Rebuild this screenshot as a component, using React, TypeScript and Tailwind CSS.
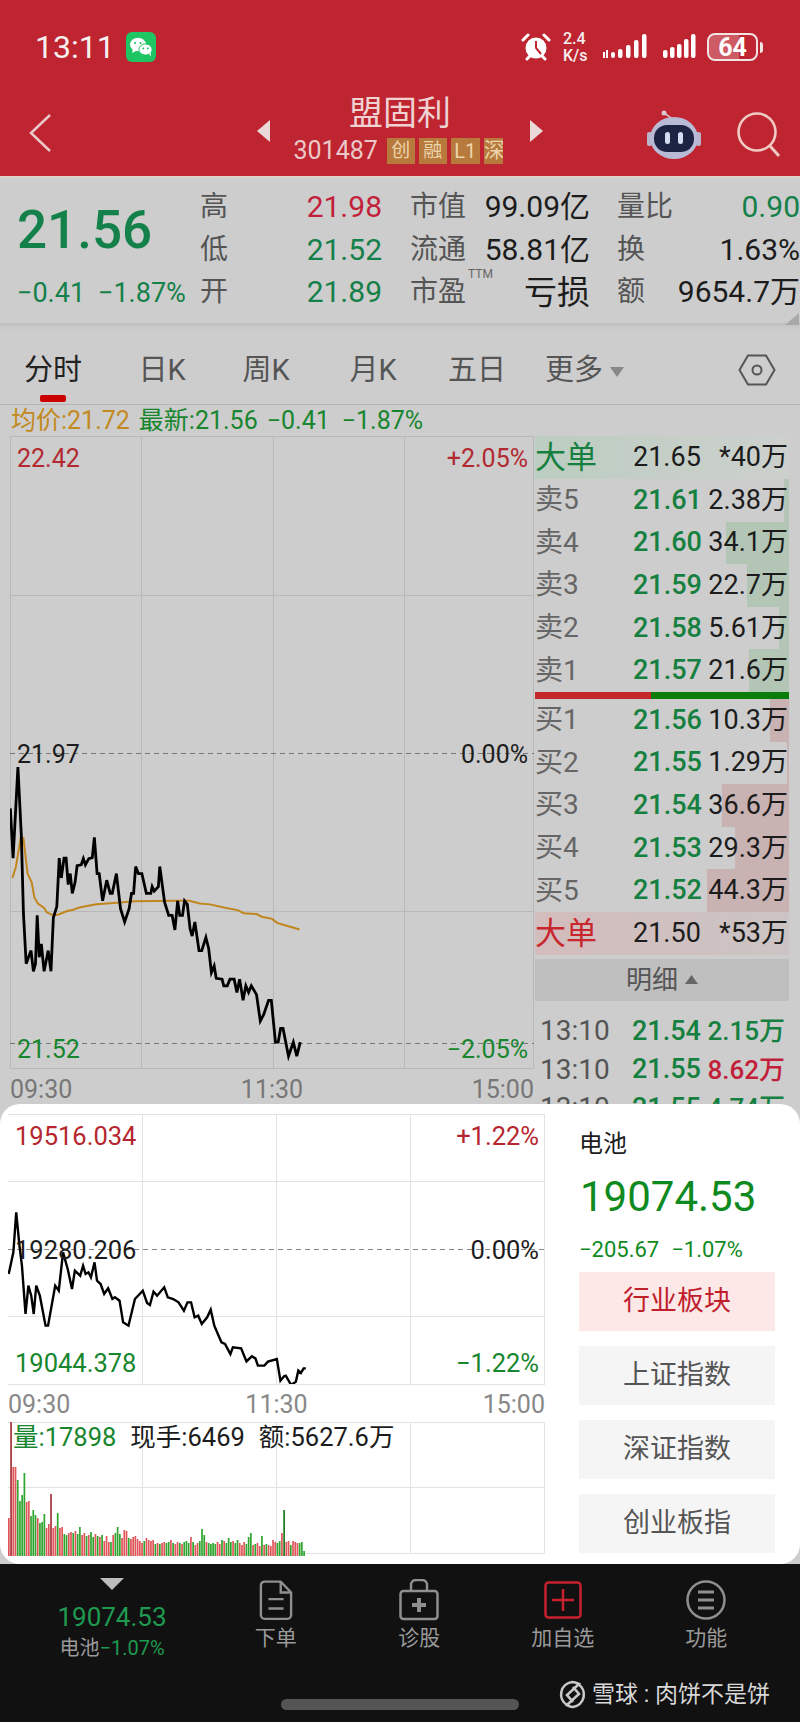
const priceLine =
  "30,862 38,975 52,768 62,925 68,1100 76,1215 90,1185 97,1232 103,1215 108,1105 114,1200 120,1170 128,1232 140,1185 148,1232 155,1110 165,1085 172,975 178,1020 186,975 192,975 198,1035 204,1010 210,1055 218,1030 224,992 236,990 242,976 248,990 258,976 268,974 274,928 282,1010 288,1010 298,1072 310,1025 320,1055 326,1055 338,1010 350,1090 362,1120 375,1090 382,1055 388,1055 394,994 402,1010 412,1010 425,1055 438,1055 442,1040 448,1050 460,1040 464,994 478,1075 490,1105 500,1105 508,1138 516,1072 522,1105 530,1105 536,1072 544,1080 552,1135 558,1152 566,1120 578,1185 586,1185 598,1155 606,1180 614,1235 622,1220 628,1248 645,1250 650,1265 660,1265 668,1250 680,1250 688,1280 696,1250 706,1298 714,1265 722,1280 730,1265 745,1285 756,1345 766,1330 780,1298 788,1298 800,1393 808,1393 815,1362 822,1362 838,1425 852,1393 862,1425 872,1393";
const avgLine =
  "36,1020 46,995 60,930 68,930 80,1010 92,1030 100,1065 110,1078 128,1088 136,1098 155,1105 170,1103 195,1095 210,1093 230,1087 280,1080 330,1077 390,1073 500,1072 550,1072 580,1078 610,1080 650,1087 690,1093 708,1100 745,1102 760,1108 790,1113 805,1122 830,1128 870,1137";
const indexLine =
  "25,525 38,460 46,340 55,440 62,500 72,645 80,560 88,590 95,645 102,560 112,590 128,680 135,680 155,560 165,575 177,460 190,510 202,570 210,515 225,530 233,500 240,525 248,520 255,535 265,490 272,545 282,555 292,585 303,568 315,600 322,595 335,605 345,670 360,680 378,600 400,575 412,612 420,618 430,578 440,590 460,565 470,595 485,600 500,610 515,635 525,610 535,610 545,655 555,650 565,675 580,655 590,632 600,680 620,730 630,735 645,765 652,745 675,748 690,787 705,772 715,778 722,800 740,800 750,788 775,780 785,845 795,832 800,830 815,858 828,848 835,815 842,822 850,808 856,808";

const volumes = [
  38, 137, 89, 89, 76, 55, 61, 83, 54, 55, 40, 46, 41, 38, 33, 34, 42, 28, 32, 62, 28, 30, 43, 28, 29, 22, 21, 23, 24,
  23, 25, 22, 29, 21, 23, 20, 21, 24, 19, 22, 20, 19, 21, 15, 20, 14, 14, 21, 23, 29, 22, 18, 26, 25, 18, 17, 19, 20,
  17, 15, 13, 15, 18, 16, 15, 16, 12, 13, 12, 13, 14, 13, 14, 16, 13, 12, 14, 13, 12, 14, 15, 13, 19, 14, 11, 13, 15,
  27, 21, 14, 13, 12, 13, 12, 14, 12, 16, 15, 13, 18, 14, 15, 13, 16, 13, 11, 14, 12, 19, 23, 11, 12, 13, 10, 20, 11,
  12, 11, 10, 16, 14, 13, 15, 23, 46, 14, 15, 11, 15, 14, 13, 13, 14, 5,
];
const volumeColors =
  "rrrrggggrrgggrgggrrrrrgrrggrrgrggrrgrggrgrgrrrgrgggrrrgrrrrrrgrrrrgrgrrggrgrrgrgggrgrrgggrggggrrgrgggrggrrrgggrgrrgrgrrrrggrgrrgrrrg";

function OrderRow({ label, price, qty, bar, barColor }: { label: string; price: string; qty: string; bar: number; barColor: string }) {
  return (
    <div className="relative flex h-[42.6px] items-center">
      <div className={`absolute top-0 right-0 bottom-0 ${barColor}`} style={{ width: bar }} />
      <span className="relative w-[98px] text-[28px] text-[#666]">{label}</span>
      <span className="relative w-[72px] text-[27px] font-medium text-[#158040]">{price}</span>
      <span className="relative flex-1 pr-[1px] text-right text-[27px] text-[#1c1c1c]">{qty}</span>
    </div>
  );
}

function BigOrder({ color, bg, price, qty }: { color: string; bg: string; price: string; qty: string }) {
  return (
    <div className={`flex h-[43px] items-center ${bg}`}>
      <span className={`w-[98px] text-[31px] ${color}`}>大单</span>
      <span className="w-[72px] text-[27px] text-[#1c1c1c]">{price}</span>
      <span className="flex-1 pr-[1px] text-right text-[27px] text-[#1c1c1c]">{qty}</span>
    </div>
  );
}

function Tick({ price, qty, qtyColor }: { price: string; qty: string; qtyColor: string }) {
  return (
    <div className="flex h-[38.5px] items-center text-[27px]">
      <span className="w-[97px] pl-[5px] text-[28px] text-[#555]">13:10</span>
      <span className="w-[72px] font-medium text-[#158040]">{price}</span>
      <span className={`flex-1 pr-[4px] text-right text-[26px] font-medium ${qtyColor}`}>{qty}</span>
    </div>
  );
}

function Stat({ label, value, color, big }: { label: string; value: string; color: string; big?: boolean }) {
  return (
    <div className="flex h-[42.5px] items-center justify-between">
      <span className="text-[28px] text-[#555]">{label}</span>
      <span className={`${big ? "text-[33px]" : "text-[30px]"} ${color}`}>{value}</span>
    </div>
  );
}

function SideButton({ label, active }: { label: string; active?: boolean }) {
  return (
    <div
      className={`flex h-[59px] items-center justify-center text-[27px] ${
        active ? "bg-[#fde8e8] text-[#c0202c]" : "bg-[#f5f5f5] text-[#555]"
      }`}
    >
      {label}
    </div>
  );
}

function BottomItem({ label, children }: { label: string; children: React.ReactNode }) {
  return (
    <div className="flex w-[143.5px] flex-col items-center">
      <div className="flex h-[44px] items-center">{children}</div>
      <span className="mt-[6px] text-[21px] text-[#9a9a9a]">{label}</span>
    </div>
  );
}

export default function App() {
  return (
    <div className="flex h-[1722px] w-[800px] flex-col overflow-hidden bg-[#cdcdcd] font-['Roboto','Noto_Sans_CJK_SC',sans-serif] leading-none">
      <header className="h-[176px] bg-[#be2530]">
        <div className="flex h-[94px] items-center pl-[35px]">
          <span className="text-[32px] text-[#f7f0f0]">13:11</span>
          <svg className="ml-[11px]" width="30" height="30" viewBox="0 0 30 30">
            <rect width="30" height="30" rx="6" fill="#1fc463" />
            <ellipse cx="12" cy="12.5" rx="8" ry="6.8" fill="#fff" />
            <path d="M7 17l-1 4 4-2z" fill="#fff" />
            <ellipse cx="19.5" cy="17.5" rx="6.6" ry="5.6" fill="#fff" stroke="#1fc463" />
            <path d="M23 22l2 2.5-.5-4z" fill="#fff" />
            <circle cx="9" cy="11" r="1.1" fill="#1fc463" />
            <circle cx="14.5" cy="11" r="1.1" fill="#1fc463" />
            <circle cx="17.3" cy="16.5" r="0.9" fill="#1fc463" />
            <circle cx="21.8" cy="16.5" r="0.9" fill="#1fc463" />
          </svg>
          <svg className="mr-[12px] ml-auto" width="30" height="30" viewBox="0 0 30 30">
            <circle cx="15" cy="16" r="10.5" fill="#fff" />
            <path d="M15 9v7l5 6" fill="none" stroke="#be2530" strokeWidth="2" />
            <path d="M2 8l5-5M28 8l-5-5M6 27l3-3M24 27l-3-3" stroke="#fff" strokeWidth="3" strokeLinecap="round" />
          </svg>
          <div className="flex w-[28px] flex-col items-start text-[16px] leading-[17px] font-medium text-[#f7f0f0]">
            <span>2.4</span>
            <span>K/s</span>
          </div>
          <svg className="ml-[11px]" width="46" height="26" viewBox="0 0 46 26">
            <path d="M1 18h2v6H1zM4 16h2v8H4z" fill="#fff" />
            <rect x="9" y="18" width="4" height="6" rx="2" fill="#fff" />
            <rect x="16" y="15" width="4.5" height="9" rx="2" fill="#fff" />
            <rect x="24" y="11" width="4.5" height="13" rx="2" fill="#fff" />
            <rect x="32" y="6" width="4.5" height="18" rx="2" fill="#fff" />
            <rect x="40" y="0" width="4.5" height="24" rx="2" fill="#fff" />
          </svg>
          <svg className="ml-[15px]" width="33" height="26" viewBox="0 0 33 26">
            <rect x="0" y="16" width="4.5" height="8" rx="2" fill="#fff" />
            <rect x="7" y="13" width="4.5" height="11" rx="2" fill="#fff" />
            <rect x="14" y="10" width="4.5" height="14" rx="2" fill="#fff" />
            <rect x="21" y="5" width="4.5" height="19" rx="2" fill="#fff" />
            <rect x="28" y="0" width="4.5" height="24" rx="2" fill="#fff" />
          </svg>
          <div className="relative ml-[11px] flex h-[28px] w-[51px] items-center justify-center overflow-hidden rounded-[8px] border-2 border-[#f3e4e4] text-[25px] font-bold text-white">
            <div className="absolute top-0 bottom-0 left-0 w-[64%] bg-white/25" />
            <span className="relative">64</span>
          </div>
          <div className="mr-[37px] ml-[2px] h-[11px] w-[3px] rounded-r bg-[#f3e4e4]" />
        </div>
        <div className="flex h-[82px] items-center">
          <div className="w-[257px] pb-[4px] pl-[28px]">
            <svg width="24" height="40" viewBox="0 0 24 40">
              <path d="M22 2L3 20l19 18" fill="none" stroke="#ecc9c9" strokeWidth="2.5" />
            </svg>
          </div>
          <svg className="mb-[9px]" width="13" height="22" viewBox="0 0 13 22">
            <path d="M13 0v22L0 11z" fill="#ead9d9" />
          </svg>
          <div className="flex w-[260px] flex-col items-center pb-[11px]">
            <span className="text-[34px] text-[#efd2d2]">盟固利</span>
            <div className="mt-[8px] flex w-[213px] items-center">
              <span className="mr-[9px] text-[25px] text-[#ecc9c9]">301487</span>
              <span className="mr-[4px] flex h-[26px] w-[28px] shrink-0 items-center justify-center bg-[#b77a3c] text-[19px] text-[#ecd4ac]">创</span>
              <span className="mr-[4px] flex h-[26px] w-[28px] shrink-0 items-center justify-center bg-[#b77a3c] text-[19px] text-[#ecd4ac]">融</span>
              <span className="mr-[4px] flex h-[26px] w-[29px] shrink-0 items-center justify-center bg-[#b77a3c] text-[20px] text-[#ecd4ac]">L1</span>
              <span className="flex h-[26px] w-[19px] shrink-0 items-center justify-start overflow-hidden bg-[#b77a3c] text-[21px] text-[#ecd4ac]">深</span>
            </div>
          </div>
          <svg className="mb-[9px]" width="13" height="22" viewBox="0 0 13 22">
            <path d="M0 0v22l13-11z" fill="#ead9d9" />
          </svg>
          <svg className="ml-[104px]" width="54" height="50" viewBox="0 0 54 50">
            <path d="M25 9c-3-3-6-4-7-6" fill="none" stroke="#d9c7d0" strokeWidth="1.6" />
            <circle cx="17" cy="3" r="2.5" fill="#d9c7d0" />
            <rect x="0" y="22" width="5" height="14" rx="2" fill="#b9b3cc" />
            <rect x="49" y="22" width="5" height="14" rx="2" fill="#b9b3cc" />
            <ellipse cx="27" cy="28" rx="24" ry="21" fill="#b9bad6" />
            <rect x="7" y="15" width="40" height="27" rx="13" fill="#1d2443" />
            <rect x="18" y="22" width="5" height="12" rx="2.5" fill="#d5dcf2" />
            <rect x="31" y="22" width="5" height="12" rx="2.5" fill="#d5dcf2" />
          </svg>
          <svg className="ml-[36px]" width="44" height="46" viewBox="0 0 44 46">
            <circle cx="20" cy="20" r="18.5" fill="none" stroke="#f0c8c4" strokeWidth="2.6" />
            <path d="M33 34l9 10" stroke="#f0c8c4" strokeWidth="3" />
          </svg>
        </div>
      </header>
      <div className="h-[2px] bg-[#dcd3cd]" />

      <section className="flex h-[145px] bg-[#cdcdcd] pt-[8px]">
        <div className="w-[200px] shrink-0 pl-[17px]">
          <div className="mt-[18px] text-[53px] font-medium text-[#14804a]">21.56</div>
          <div className="mt-[23px] flex text-[27px] text-[#14804a]">
            <span className="w-[81px]">−0.41</span>
            <span>−1.87%</span>
          </div>
        </div>
        <div className="w-[182px] shrink-0">
          <Stat label="高" value="21.98" color="text-[#c21f3a]" />
          <Stat label="低" value="21.52" color="text-[#14804a]" />
          <Stat label="开" value="21.89" color="text-[#14804a]" />
        </div>
        <div className="ml-[28px] w-[180px] shrink-0">
          <Stat label="市值" value="99.09亿" color="text-[#1c1c1c]" />
          <Stat label="流通" value="58.81亿" color="text-[#1c1c1c]" />
          <div className="relative">
            <Stat label="市盈" value="亏损" color="text-[#1c1c1c]" big />
            <span className="absolute top-[-3px] left-[58px] text-[12px] text-[#666]">TTM</span>
          </div>
        </div>
        <div className="ml-[27px] w-[183px] shrink-0">
          <Stat label="量比" value="0.90" color="text-[#14804a]" />
          <Stat label="换" value="1.63%" color="text-[#1c1c1c]" />
          <Stat label="额" value="9654.7万" color="text-[#1c1c1c]" />
        </div>
      </section>
      <div className="relative h-[9px] border-t-2 border-[#c0c0c0] bg-gradient-to-b from-[#c6c6c6] to-[#cdcdcd]">
        <svg className="absolute top-[-12px] right-[1px]" width="14" height="12" viewBox="0 0 14 12">
          <path d="M14 0v12H0z" fill="#a8a8a8" />
        </svg>
      </div>

      <nav className="flex h-[73px] items-center border-b border-[#b5b5b5] pt-[4px] text-[29px] text-[#555]">
        <div className="relative w-[106px] text-center text-[#222]">
          分时
          <div className="absolute top-[39px] left-[40px] h-[7px] w-[26px] rounded-[2px] bg-[#cc0000]" />
        </div>
        <div className="w-[112px] text-center">日K</div>
        <div className="w-[96px] text-center">周K</div>
        <div className="w-[118px] text-center">月K</div>
        <div className="w-[90px] text-center">五日</div>
        <div className="ml-[23px]">更多</div>
        <svg className="mt-[3px] ml-[7px]" width="14" height="10" viewBox="0 0 14 10">
          <path d="M0 0h14L7 10z" fill="#888" />
        </svg>
        <svg className="ml-[114px]" width="38" height="32" viewBox="0 0 38 32">
          <path d="M10 1.500h18L36.500 16 28 30.500H10L1.500 16z" fill="none" stroke="#555" strokeWidth="2" />
          <circle cx="19" cy="16" r="4.500" fill="none" stroke="#555" strokeWidth="2" />
        </svg>
      </nav>

      <div className="flex h-[31px] items-center pl-[11px] text-[25px] whitespace-pre">
        <span className="text-[#c28a1e]">均价:21.72</span>
        <span className="ml-[9px] text-[#17862e]">最新:21.56</span>
        <span className="ml-[9px] text-[#17862e]">−0.41</span>
        <span className="ml-[12px] text-[#17862e]">−1.87%</span>
      </div>

      <section className="flex h-[668px] overflow-hidden">
        <div className="w-[535px] shrink-0 pl-[10px]">
          <div className="relative h-[633px] w-[524px]">
            <svg className="absolute inset-0" width="524" height="633" viewBox="0 0 524 633">
              <path d="M0.500 0.500h523v632h-523zM131.500 0v633M263.500 0v633M394.500 0v633M0 159.500h524M0 475.500h524" fill="none" stroke="#b8b8b8" />
              <path d="M0 317.500h524M0 607.500h524" stroke="#777" strokeDasharray="5 4" />
            </svg>
            <svg className="absolute inset-0" width="524" height="633" viewBox="29 16 1522 1438" preserveAspectRatio="none">
              <polyline points={avgLine} fill="none" stroke="#c2861e" strokeWidth="2" vectorEffect="non-scaling-stroke" />
              <polyline points={priceLine} fill="none" stroke="#000" strokeWidth="2.800" vectorEffect="non-scaling-stroke" />
            </svg>
            <span className="absolute top-[10px] left-[7px] text-[25px] text-[#b22a30]">22.42</span>
            <span className="absolute top-[10px] right-[6px] text-[25px] text-[#b22a30]">+2.05%</span>
            <span className="absolute top-[306px] left-[7px] text-[25px] text-[#1c1c1c]">21.97</span>
            <span className="absolute top-[306px] right-[6px] text-[25px] text-[#1c1c1c]">0.00%</span>
            <span className="absolute top-[601px] left-[7px] text-[25px] text-[#17862e]">21.52</span>
            <span className="absolute top-[601px] right-[6px] text-[25px] text-[#17862e]">−2.05%</span>
          </div>
          <div className="mt-[8px] flex w-[524px] justify-between text-[25px] text-[#777]">
            <span>09:30</span>
            <span>11:30</span>
            <span>15:00</span>
          </div>
        </div>
        <div className="w-[254px] shrink-0">
          <BigOrder color="text-[#158040]" bg="bg-gradient-to-r from-[#bccdc1] to-[#cdd0cd]" price="21.65" qty="*40万" />
          <OrderRow label="卖5" price="21.61" qty="2.38万" bar={5} barColor="bg-[#b3c6b5]" />
          <OrderRow label="卖4" price="21.60" qty="34.1万" bar={63} barColor="bg-[#b3c6b5]" />
          <OrderRow label="卖3" price="21.59" qty="22.7万" bar={42} barColor="bg-[#b3c6b5]" />
          <OrderRow label="卖2" price="21.58" qty="5.61万" bar={10} barColor="bg-[#b3c6b5]" />
          <OrderRow label="卖1" price="21.57" qty="21.6万" bar={40} barColor="bg-[#b3c6b5]" />
          <div className="flex h-[7px]">
            <div className="w-[116px] bg-[#c4282c]" />
            <div className="flex-1 bg-[#0a7d0a]" />
          </div>
          <OrderRow label="买1" price="21.56" qty="10.3万" bar={19} barColor="bg-[#c9b2b2]" />
          <OrderRow label="买2" price="21.55" qty="1.29万" bar={2} barColor="bg-[#c9b2b2]" />
          <OrderRow label="买3" price="21.54" qty="36.6万" bar={67} barColor="bg-[#c9b2b2]" />
          <OrderRow label="买4" price="21.53" qty="29.3万" bar={54} barColor="bg-[#c9b2b2]" />
          <OrderRow label="买5" price="21.52" qty="44.3万" bar={82} barColor="bg-[#c9b2b2]" />
          <BigOrder color="text-[#c8282d]" bg="bg-gradient-to-r from-[#d3bcbc] to-[#ccc4c4]" price="21.50" qty="*53万" />
          <div className="mt-[4px] flex h-[42px] items-center justify-center bg-[#bfbfbf] text-[26px] text-[#555]">
            明细
            <svg className="ml-[7px]" width="13" height="9" viewBox="0 0 13 9">
              <path d="M0 9h13L6.500 0z" fill="#666" />
            </svg>
          </div>
          <div className="pt-[11px]">
            <Tick price="21.54" qty="2.15万" qtyColor="text-[#158040]" />
            <Tick price="21.55" qty="8.62万" qtyColor="text-[#c21f3a]" />
            <Tick price="21.55" qty="4.74万" qtyColor="text-[#158040]" />
          </div>
        </div>
      </section>

      <section className="relative z-10 flex h-[460px] rounded-[20px] bg-white">
        <div className="w-[555px] shrink-0 pt-[10px] pl-[8px]">
          <div className="relative h-[270px] w-[537px]">
            <svg className="absolute inset-0" width="537" height="271" viewBox="0 0 537 271">
              <path d="M0 0.500h537M536.500 0v270M134.500 0v270M268.500 0v270M402.500 0v270M0 67.500h537M0 202.500h537M0 270.500h537" fill="none" stroke="#e2e2e2" />
              <path d="M0 135.500h537" stroke="#888" strokeDasharray="5 4" />
            </svg>
            <svg className="absolute inset-0" width="537" height="270" viewBox="23 45 1502 810" preserveAspectRatio="none">
              <polyline points={indexLine} fill="none" stroke="#000" strokeWidth="2.400" vectorEffect="non-scaling-stroke" />
            </svg>
            <span className="absolute top-[10px] left-[7px] text-[25.500px] text-[#b5262e]">19516.034</span>
            <span className="absolute top-[10px] right-[6px] text-[25.500px] text-[#b5262e]">+1.22%</span>
            <span className="absolute top-[124px] left-[7px] text-[25.500px] text-[#1c1c1c]">19280.206</span>
            <span className="absolute top-[124px] right-[6px] text-[25.500px] text-[#1c1c1c]">0.00%</span>
            <span className="absolute top-[237px] left-[7px] text-[25.500px] text-[#17862e]">19044.378</span>
            <span className="absolute top-[237px] right-[6px] text-[25.500px] text-[#17862e]">−1.22%</span>
          </div>
          <div className="flex h-[38px] w-[537px] items-center justify-between pt-[2px] text-[25px] text-[#888]">
            <span>09:30</span>
            <span>11:30</span>
            <span>15:00</span>
          </div>
          <div className="relative h-[134px] w-[537px]">
            <svg className="absolute inset-0" width="537" height="134" viewBox="0 0 537 134">
              <path d="M0 0.500h537M536.500 0v132M134.500 0v132M268.500 0v132M402.500 0v132M0 65.500h537M0 131.500h537" fill="none" stroke="#e2e2e2" />
              {volumes.map((v, i) => (
                <rect
                  key={i}
                  x={i * 2.22}
                  y={134 - v}
                  width="1.700"
                  height={v}
                  fill={i === 1 || i === 19 ? "#a8323a" : volumeColors[i] === "r" ? "#e0555a" : v > 40 && i > 100 ? "#1d7a1d" : "#2fa52f"}
                />
              ))}
            </svg>
            <div className="absolute top-[3px] left-[5px] flex text-[25.500px] whitespace-pre">
              <span className="text-[#17862e]">量:17898</span>
              <span className="ml-[14px] text-[#1c1c1c]">现手:6469</span>
              <span className="ml-[14px] text-[#1c1c1c]">额:5627.6万</span>
            </div>
          </div>
        </div>
        <div className="flex-1 pr-[25px] pl-[24px]">
          <div className="mt-[28px] text-[24px] text-[#1c1c1c]">电池</div>
          <div className="mt-[20px] pl-[1px] text-[42px] text-[#0f8a1e]">19074.53</div>
          <div className="mt-[20px] flex h-[23px] items-center text-[22px] whitespace-pre text-[#0f8a1e]">
            <span>−205.67</span>
            <span className="ml-[12px]">−1.07%</span>
          </div>
          <div className="mt-[11px] flex flex-col gap-[15px]">
            <SideButton label="行业板块" active />
            <SideButton label="上证指数" />
            <SideButton label="深证指数" />
            <SideButton label="创业板指" />
          </div>
        </div>
      </section>

      <footer className="relative flex flex-1 flex-col bg-[#111]">
        <div className="flex pt-[14px]">
          <div className="flex w-[204px] flex-col items-center pl-[20px]">
            <svg width="24" height="12" viewBox="0 0 24 12">
              <path d="M0 0h24L12 12z" fill="#bdbdbd" />
            </svg>
            <span className="mt-[14px] text-[26px] text-[#1f9a50]">19074.53</span>
            <div className="mt-[8px] text-[20px] whitespace-pre">
              <span className="text-[#9a9a9a]">电池</span>
              <span className="text-[#1f9a50]">−1.07%</span>
            </div>
          </div>
          <BottomItem label="下单">
            <svg width="34" height="42" viewBox="0 0 36 42" fill="none" stroke="#8f8f8f" strokeWidth="2.500">
              <path d="M6 1.500h17L34 13v24a4 4 0 0 1-4 4H6a4 4 0 0 1-4-4V5.500a4 4 0 0 1 4-4z" />
              <path d="M23 2v11h11M10 20h16M10 30h16" />
            </svg>
          </BottomItem>
          <BottomItem label="诊股">
            <svg width="40" height="42" viewBox="0 0 40 42" fill="none" stroke="#8f8f8f" strokeWidth="2.500">
              <rect x="1.500" y="12" width="37" height="28" rx="3" />
              <path d="M12 12V6a5 5 0 0 1 5-5h6a5 5 0 0 1 5 5v6" />
              <path d="M20 19v14M13 26h14" strokeWidth="4" />
            </svg>
          </BottomItem>
          <BottomItem label="加自选">
            <svg width="38" height="38" viewBox="0 0 38 38" fill="none" stroke="#c8202e" strokeWidth="2.500">
              <rect x="1.500" y="1.500" width="35" height="35" rx="3" />
              <path d="M19 8v22M8 19h22" />
            </svg>
          </BottomItem>
          <BottomItem label="功能">
            <svg width="40" height="40" viewBox="0 0 40 40" fill="none" stroke="#8f8f8f" strokeWidth="2.500">
              <circle cx="20" cy="20" r="18.500" />
              <path d="M12 12h16M12 20h16M12 28h16" strokeWidth="3" />
            </svg>
          </BottomItem>
        </div>
        <div className="mx-auto mt-auto mb-[12px] h-[11px] w-[238px] rounded-full bg-[#555]" />
        <div className="absolute top-[116px] left-[558px] flex items-center">
          <svg width="29" height="29" viewBox="0 0 29 29" fill="none" stroke="#c9c9c9" strokeWidth="2.600">
            <path d="M9 25A12.500 12.500 0 0 1 14 2c3 0 5 1 7 2L9 15l6 7" />
            <path d="M20 4a12.500 12.500 0 0 1-5 23c-3 0-4-1-6-2l12-11-6-7" />
          </svg>
          <span className="ml-[5px] text-[23px] whitespace-pre text-[#d8d8d8]">雪球 : 肉饼不是饼</span>
        </div>
      </footer>
    </div>
  );
}
